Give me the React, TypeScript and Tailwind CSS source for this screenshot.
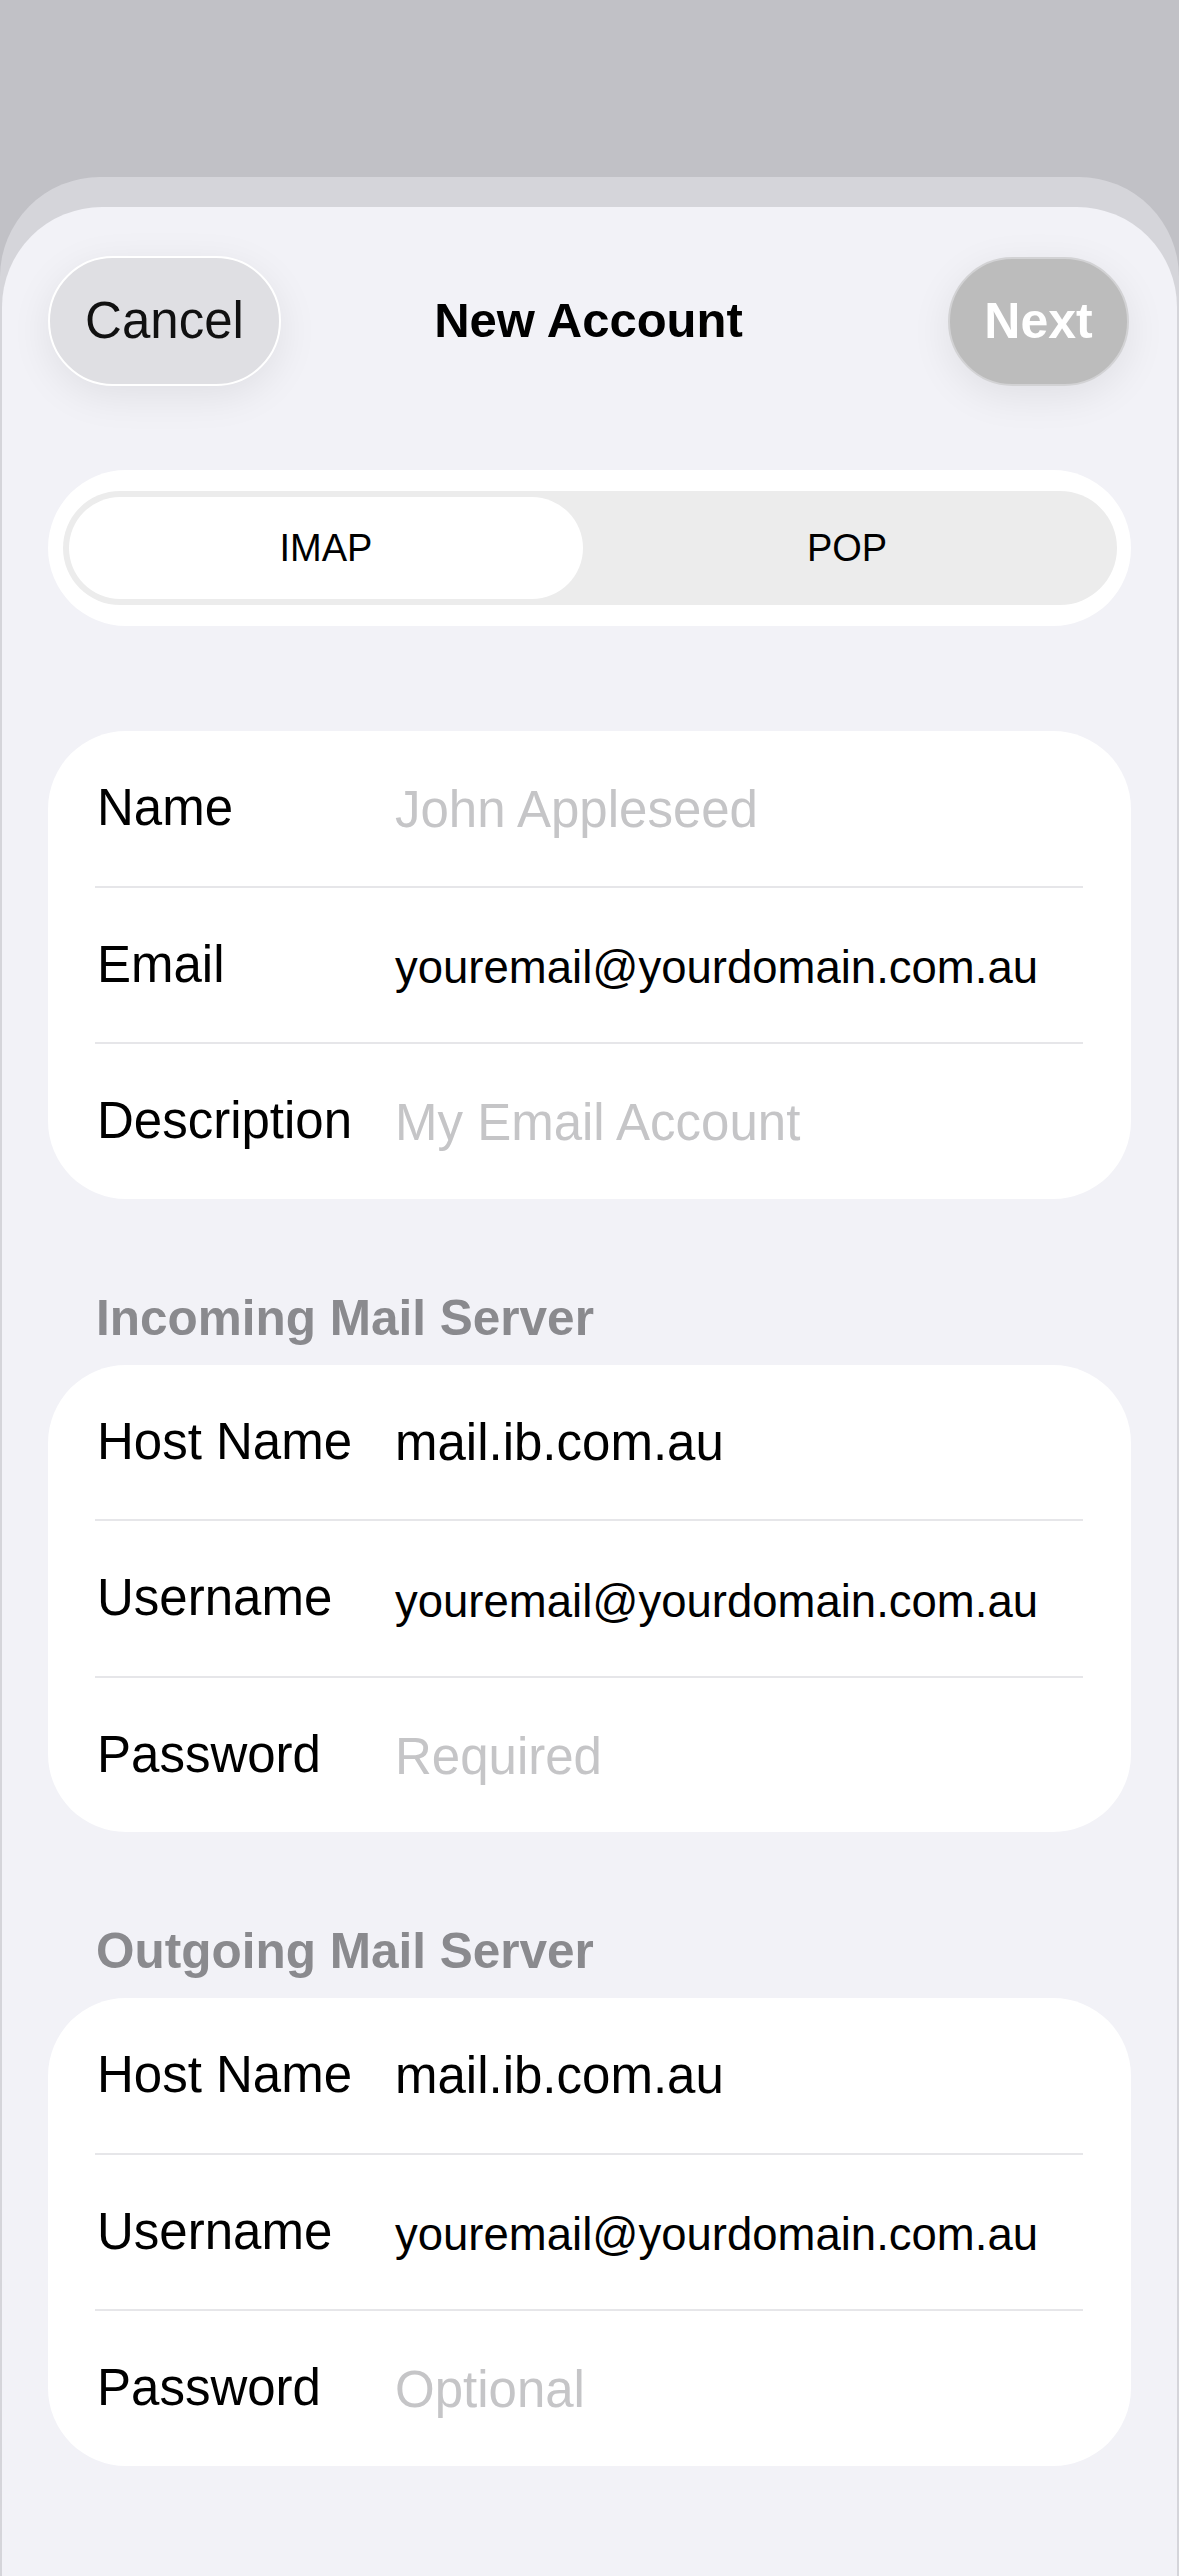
import React from 'react'

type Row = { label: string; value: string; ph?: boolean; small?: boolean }

const font = { fontFamily: '"Liberation Sans", Arial, sans-serif' }

const account: Row[] = [
  { label: 'Name', value: 'John Appleseed', ph: true },
  { label: 'Email', value: 'youremail@yourdomain.com.au', small: true },
  { label: 'Description', value: 'My Email Account', ph: true },
]

const incoming: Row[] = [
  { label: 'Host Name', value: 'mail.ib.com.au' },
  { label: 'Username', value: 'youremail@yourdomain.com.au', small: true },
  { label: 'Password', value: 'Required', ph: true },
]

const outgoing: Row[] = [
  { label: 'Host Name', value: 'mail.ib.com.au' },
  { label: 'Username', value: 'youremail@yourdomain.com.au', small: true },
  { label: 'Password', value: 'Optional', ph: true },
]

function FormCard({ rows }: { rows: Row[] }) {
  return (
    <div className="bg-white rounded-[78px] overflow-hidden">
      {rows.map((r, i) => (
        <div key={r.label}>
          {i > 0 && <div className="h-[2px] bg-[#e6e6e9] ml-[47px] mr-[48px]" />}
          <div className="h-[154.5px] flex items-center pl-[49px] pr-[48px]">
            <div className="w-[298px] shrink-0 text-[51px] text-black whitespace-nowrap">{r.label}</div>
            <div
              className={
                r.ph
                  ? 'text-[51px] text-[#c5c5c7] pt-[4px] whitespace-nowrap'
                  : r.small
                    ? 'text-[45.5px] text-black pt-[7px] whitespace-nowrap'
                    : 'text-[51px] text-black pt-[2px] whitespace-nowrap'
              }
            >
              {r.value}
            </div>
          </div>
        </div>
      ))}
    </div>
  )
}

function Header({ children }: { children: React.ReactNode }) {
  return (
    <div className="mt-[90px] mb-[18px] pl-[48px] h-[58px] leading-[58px] text-[49.5px] font-bold text-[#8a8a8e] whitespace-nowrap">
      {children}
    </div>
  )
}

export default function App() {
  return (
    <div className="w-[1179px] min-h-[2576px] bg-[#c1c1c6] pt-[177px]" style={font}>
      <div className="bg-[#d5d5da] rounded-t-[100px] pt-[30px] min-h-[2399px] flex flex-col">
        <div className="flex-1 bg-[#f2f2f7] rounded-t-[100px] mx-[2px] pb-[110px]">
          {/* nav bar */}
          <div className="grid grid-cols-[1fr_auto_1fr] items-center pt-[49px] pl-[46px] pr-[48px]">
            <div className="justify-self-start">
              <div className="w-[233px] h-[130px] rounded-full bg-[#dfdfe3] border-2 border-white flex items-center justify-center text-[51px] text-[#111] shadow-[0_10px_40px_rgba(0,0,0,0.08)]">
                Cancel
              </div>
            </div>
            <div className="text-[49px] font-bold text-black">New Account</div>
            <div className="justify-self-end">
              <div className="w-[181px] h-[129px] rounded-full bg-[#bcbcbc] border-2 border-[#d2d2d4] flex items-center justify-center text-[50px] font-bold text-white shadow-[0_10px_40px_rgba(0,0,0,0.08)]">
                Next
              </div>
            </div>
          </div>

          <div className="pl-[46px] pr-[46px]">
            {/* segmented control */}
            <div className="mt-[84px] h-[156px] bg-white rounded-full pl-[15px] pr-[14px] py-[21px]">
              <div className="h-full bg-[#ececec] rounded-full p-[6px] flex">
                <div className="w-[514px] h-full bg-white rounded-full flex items-center justify-center text-[38px] font-medium text-black">
                  IMAP
                </div>
                <div className="flex-1 flex items-center justify-center text-[38px] font-medium text-black">
                  POP
                </div>
              </div>
            </div>

            <div className="mt-[105px]">
              <FormCard rows={account} />
            </div>

            <Header>Incoming Mail Server</Header>
            <FormCard rows={incoming} />

            <Header>Outgoing Mail Server</Header>
            <FormCard rows={outgoing} />
          </div>
        </div>
      </div>
    </div>
  )
}
